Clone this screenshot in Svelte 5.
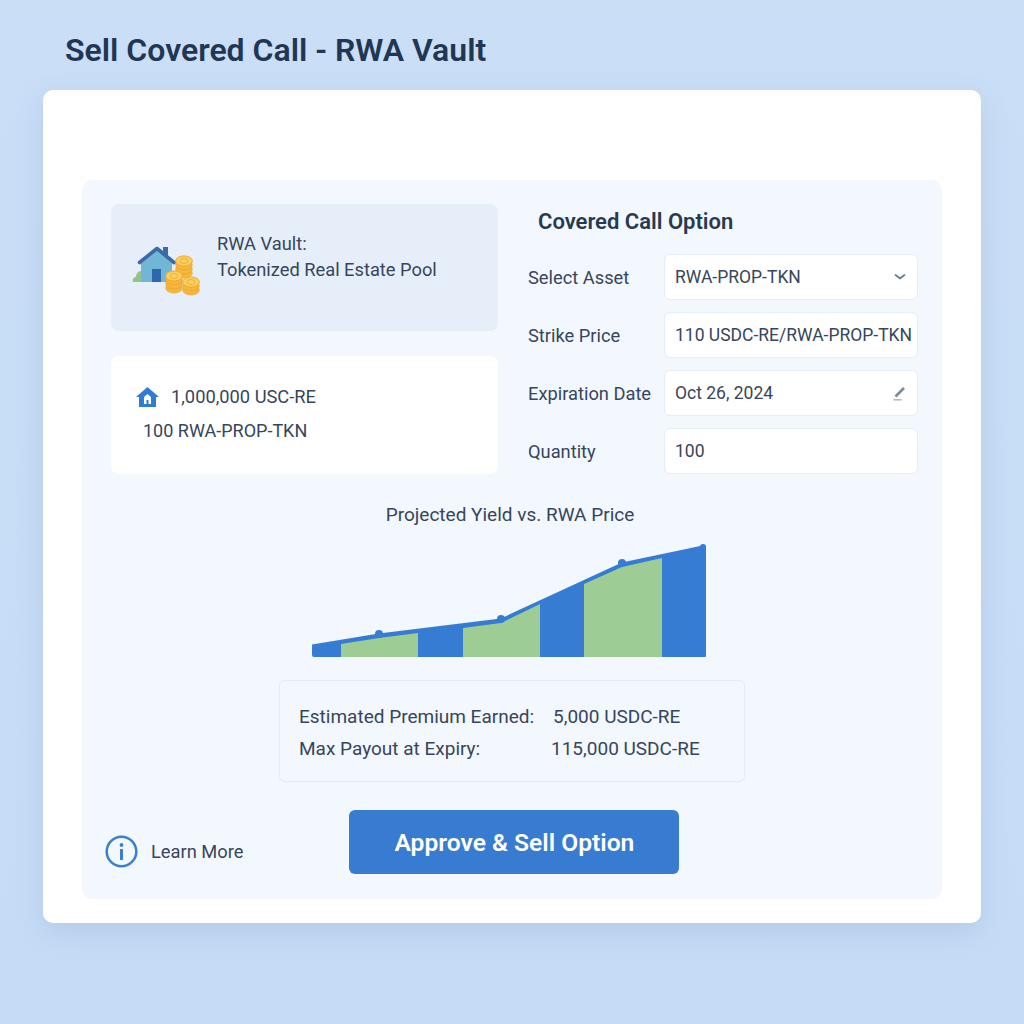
<script>
  const fields = [
    { label: 'Select Asset', value: 'RWA-PROP-TKN', icon: 'chevron' },
    { label: 'Strike Price', value: '110 USDC-RE/RWA-PROP-TKN' },
    { label: 'Expiration Date', value: 'Oct 26, 2024', icon: 'pencil' },
    { label: 'Quantity', value: '100' }
  ];

  const coinStacks = [
    { cx: 59, top: 22, count: 4 },
    { cx: 49, top: 37, count: 4 },
    { cx: 66, top: 43, count: 3 }
  ];

  // chart points, in svg coordinates
  const dots = [[67, 90], [189, 75], [310, 19], [391, 1]];
</script>

<div class="page">
  <h1>Sell Covered Call - RWA Vault</h1>

  <main class="card">
    <div class="panel">
      <div class="top">
        <div class="left">
          <section class="vault">
            <svg class="vault-icon" width="85" height="70" viewBox="0 0 85 70" aria-hidden="true">
              <path d="M8 47c-1-3 1-5 3-5 0-3 2-6 5-6s5 3 5 6c2 0 3 3 2 5z" fill="#92c585" />
              <path d="M16 27 32 14l15 13v20H16z" fill="#72b6d6" />
              <rect x="38" y="12" width="5" height="9" fill="#3a6ba6" />
              <path d="M14.500 27.500 32 13.500l17 14" fill="none" stroke="#3a6ba6" stroke-width="3.600" stroke-linejoin="round" stroke-linecap="round" />
              <rect x="27" y="34" width="9" height="13" fill="#2f67ae" />
              {#each coinStacks as stack}
                {#each Array(stack.count) as _, i}
                  <ellipse cx={stack.cx} cy={stack.top + (stack.count - 1 - i) * 4 + 4} rx="8.300" ry="5" fill="#f5b63c" stroke="#e9a42b" stroke-width="0.700" />
                {/each}
                <ellipse cx={stack.cx} cy={stack.top + 4} rx="8.300" ry="5" fill="#fbcf5f" stroke="#eba92f" stroke-width="0.700" />
                <ellipse cx={stack.cx} cy={stack.top + 4} rx="4" ry="2.500" fill="none" stroke="#e9a42b" stroke-width="0.700" />
              {/each}
            </svg>
            <div class="vault-text">
              <div>RWA Vault:</div>
              <div>Tokenized Real Estate Pool</div>
            </div>
          </section>

          <section class="balances">
            <div class="balance-line">
              <svg width="23" height="20" viewBox="0 0 23 20" aria-hidden="true">
                <path fill="#2f7bd6" fill-rule="evenodd" d="M11.500 0 23 10h-3v10H3V10H0zM8 17h2.500v-4h2v4H15v-7l-3.500-3L8 10z" />
              </svg>
              <span>1,000,000 USC-RE</span>
            </div>
            <div class="balance-second">100 RWA-PROP-TKN</div>
          </section>
        </div>

        <section class="form">
          <h2>Covered Call Option</h2>
          {#each fields as field}
            <div class="row">
              <span class="label">{field.label}</span>
              <div class="input">
                <span>{field.value}</span>
                {#if field.icon === 'chevron'}
                  <svg width="12" height="8" viewBox="0 0 12 8" aria-hidden="true">
                    <path d="M1.500 2 6 5.500 10.500 2" fill="none" stroke="#66758a" stroke-width="1.600" stroke-linecap="round" />
                  </svg>
                {:else if field.icon === 'pencil'}
                  <svg width="14" height="15" viewBox="0 0 14 15" aria-hidden="true">
                    <path d="M3.500 10.500 12 2" fill="none" stroke="#7d8a9c" stroke-width="2.600" />
                    <path d="M1.500 13.800h8" stroke="#a5afbd" stroke-width="1.400" />
                  </svg>
                {/if}
              </div>
            </div>
          {/each}
        </section>
      </div>

      <h3>Projected Yield vs. RWA Price</h3>

      <svg class="chart" width="396" height="114" viewBox="0 0 396 114" aria-hidden="true">
        <path d="M0 103 67 91 189 76 310 20 391 2 394 2V112a1 1 0 0 1-1 1H2a2 2 0 0 1-2-2z" fill="#377cd3" />
        <polygon points="29,100 67,94 106,89 106,113 29,113" fill="#9dcd95" />
        <polygon points="151,84 189,79 228,60 228,113 151,113" fill="#9dcd95" />
        <polygon points="272,40 310,23 350,14 350,113 272,113" fill="#9dcd95" />
        <polyline points="0,102 67,91 189,76 310,20 391,3" fill="none" stroke="#377cd3" stroke-width="3" stroke-linejoin="round" />
        {#each dots as dot, i}
          <circle cx={dot[0]} cy={dot[1] + (i === 3 ? 2 : 0)} r={i === 3 ? 3 : 4} fill="#377cd3" />
        {/each}
      </svg>

      <section class="summary">
        <div class="summary-row">
          <span>Estimated Premium Earned:</span>
          <span class="first">5,000 USDC-RE</span>
        </div>
        <div class="summary-row">
          <span>Max Payout at Expiry:</span>
          <span>115,000 USDC-RE</span>
        </div>
      </section>

      <div class="actions">
        <a class="learn" href="#learn">
          <svg width="33" height="33" viewBox="0 0 33 33" aria-hidden="true">
            <circle cx="16.500" cy="16.500" r="14.800" fill="none" stroke="#3a80d2" stroke-width="2.500" />
            <circle cx="16.500" cy="10" r="1.900" fill="#3a80d2" />
            <rect x="15" y="14" width="3" height="11" fill="#3a80d2" />
          </svg>
          <span>Learn More</span>
        </a>
        <button type="button">Approve &amp; Sell Option</button>
      </div>
    </div>
  </main>
</div>

<style>
  :global(body) {
    margin: 0;
    background: linear-gradient(180deg, #cadef6 0%, #c6dcf6 100%);
  }
  .page {
    height: 1024px;
    box-sizing: border-box;
    padding: 30px 43px 0;
    font-family: Roboto, "Liberation Sans", sans-serif;
    color: #36465c;
    font-size: 18.300px;
  }
  h1 {
    margin: 0 0 20px 22px;
    font-size: 32px;
    line-height: 40px;
    font-weight: 600;
    color: #1f3654;
  }
  .card {
    height: 833px;
    box-sizing: border-box;
    padding: 90px 39px 24px;
    background: #fff;
    border-radius: 10px;
    box-shadow: 0 10px 30px rgba(80, 120, 170, 0.16);
  }
  .panel {
    height: 719px;
    box-sizing: border-box;
    padding: 24px 24px 0 29px;
    background: #f3f7fe;
    border-radius: 10px;
    display: flex;
    flex-direction: column;
    align-items: center;
  }
  .top {
    align-self: stretch;
    display: grid;
    grid-template-columns: 387px 391px;
    column-gap: 29px;
  }
  .left {
    display: flex;
    flex-direction: column;
    gap: 25px;
  }
  .vault {
    height: 127px;
    box-sizing: border-box;
    padding: 30px 14px 0;
    background: #e6eff9;
    border-radius: 8px;
    display: flex;
    gap: 7px;
  }
  .vault-icon {
    margin-top: 1px;
  }
  .vault-text {
    margin-top: -3px;
    line-height: 26px;
  }
  .balances {
    height: 118px;
    box-sizing: border-box;
    padding: 29px 25px 0;
    background: #fff;
    border-radius: 8px;
  }
  .balance-line {
    display: flex;
    align-items: center;
    gap: 12px;
    line-height: 24px;
  }
  .balance-second {
    margin: 10px 0 0 7px;
    line-height: 24px;
    font-size: 18px;
  }
  h2 {
    margin: 6px 0 20px 11px;
    font-size: 22px;
    line-height: 24px;
    font-weight: 600;
    color: #273a52;
  }
  .row {
    display: grid;
    grid-template-columns: 137px 254px;
    align-items: center;
    margin-bottom: 12px;
  }
  .row:last-child {
    margin-bottom: 0;
  }
  .label {
    padding-left: 1px;
  }
  .input {
    height: 46px;
    box-sizing: border-box;
    padding: 0 7px 0 10px;
    display: flex;
    align-items: center;
    justify-content: space-between;
    background: #fff;
    border: 1px solid #e5edf7;
    border-radius: 6px;
    white-space: nowrap;
    font-size: 17.500px;
  }
  .input svg {
    margin-right: 4px;
  }
  h3 {
    margin: 28px 9px 16px 0;
    font-size: 19px;
    line-height: 26px;
    font-weight: 400;
    color: #36465c;
  }
  .chart {
    display: block;
    margin-left: -10px;
  }
  .summary {
    width: 466px;
    height: 102px;
    box-sizing: border-box;
    margin: 22px 5px 0 0;
    padding: 20px 19px 0;
    border: 1px solid #e3ebf6;
    border-radius: 6px;
    line-height: 32px;
    font-size: 19px;
  }
  .summary-row {
    display: grid;
    grid-template-columns: 252px auto;
  }
  .first {
    margin-left: 2px;
  }
  .actions {
    align-self: stretch;
    margin-top: 28px;
    display: flex;
    align-items: flex-start;
  }
  .learn {
    display: flex;
    align-items: center;
    gap: 13px;
    margin: 25px 0 0 -6px;
    color: inherit;
    text-decoration: none;
  }
  button {
    width: 330px;
    height: 64px;
    margin-left: 106px;
    background: #377cd0;
    color: #fff;
    border: 0;
    border-radius: 6px;
    font: 600 24.600px Roboto, "Liberation Sans", sans-serif;
  }
</style>
